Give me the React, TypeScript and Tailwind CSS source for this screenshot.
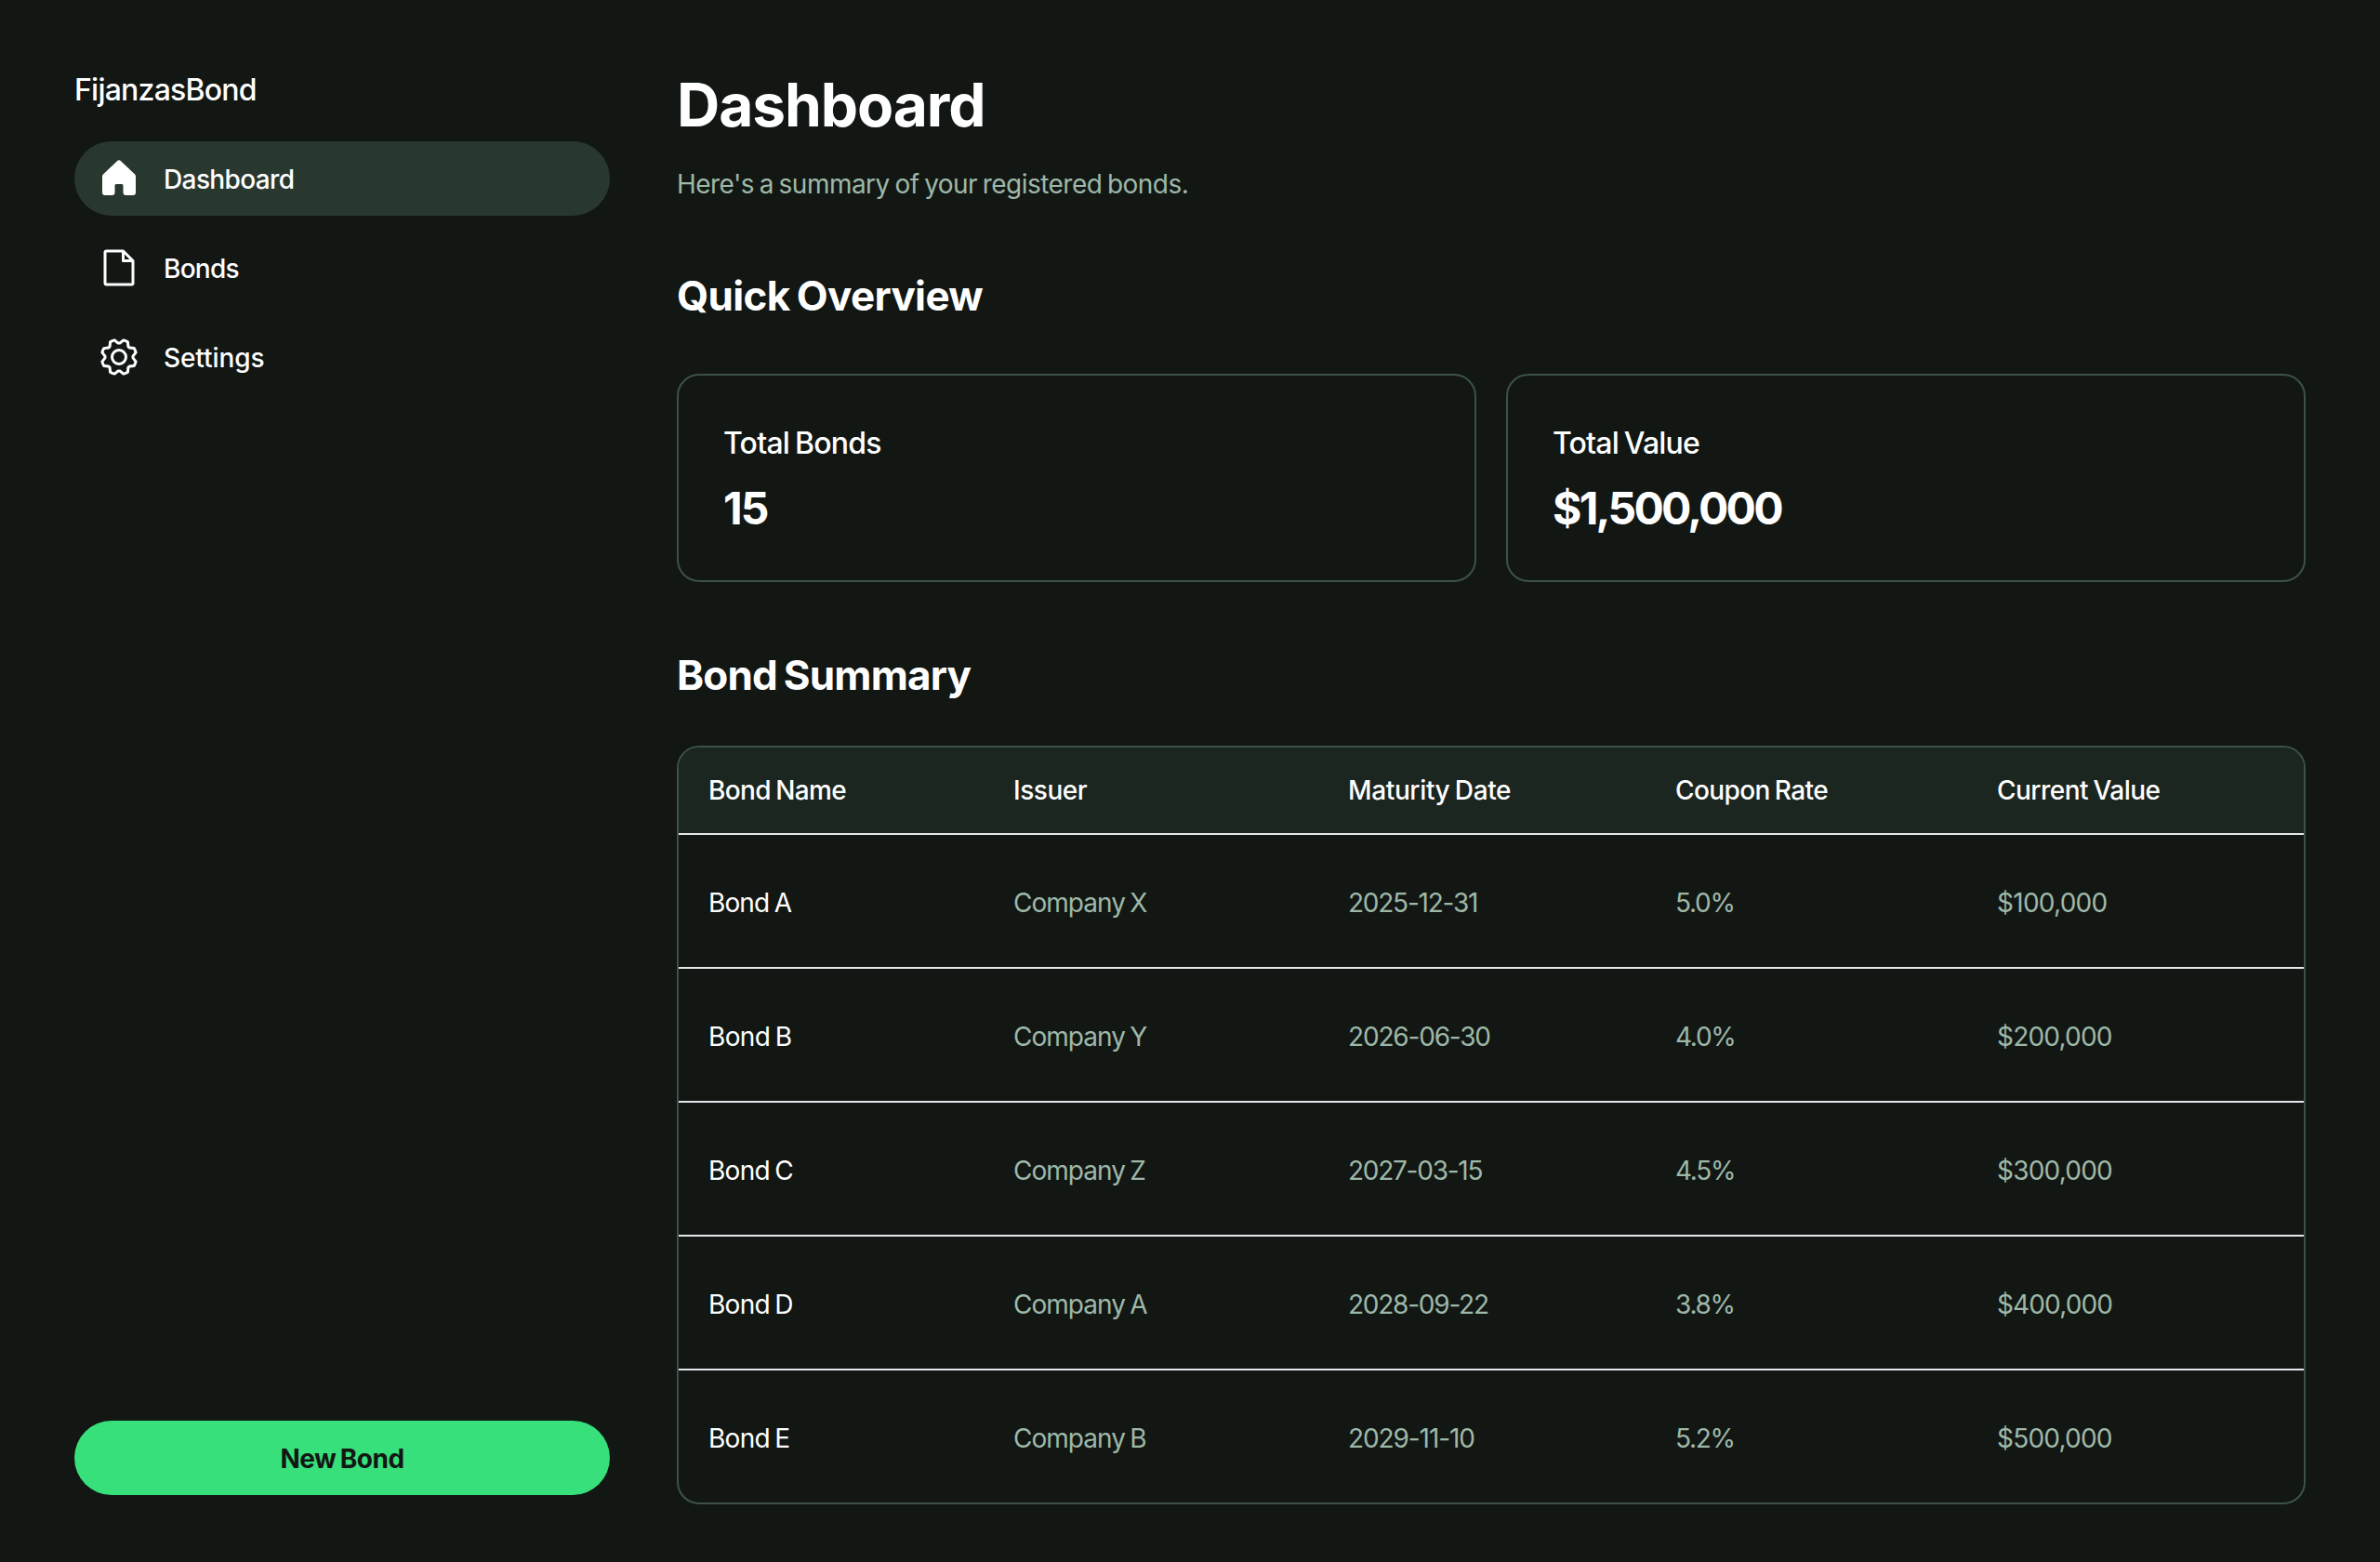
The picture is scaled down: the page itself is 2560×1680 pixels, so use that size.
import { PiGear } from 'react-icons/pi'

const bonds = [
  { name: 'Bond A', nt: 'tracking-[-0.031em]', issuer: 'Company X', date: '2025-12-31', dt: 'tracking-[-0.044em]', rate: '5.0%', value: '$100,000', vt: 'tracking-[-0.026em]' },
  { name: 'Bond B', nt: 'tracking-[-0.023em]', issuer: 'Company Y', date: '2026-06-30', dt: 'tracking-[-0.042em]', rate: '4.0%', value: '$200,000', vt: 'tracking-[-0.028em]' },
  { name: 'Bond C', nt: 'tracking-[-0.026em]', issuer: 'Company Z', date: '2027-03-15', dt: 'tracking-[-0.045em]', rate: '4.5%', value: '$300,000', vt: 'tracking-[-0.028em]' },
  { name: 'Bond D', nt: 'tracking-[-0.026em]', issuer: 'Company A', date: '2028-09-22', dt: 'tracking-[-0.044em]', rate: '3.8%', value: '$400,000', vt: 'tracking-[-0.031em]' },
  { name: 'Bond E', nt: 'tracking-[-0.026em]', issuer: 'Company B', date: '2029-11-10', dt: 'tracking-[-0.039em]', rate: '5.2%', value: '$500,000', vt: 'tracking-[-0.028em]' },
]

const headers = [
  { label: 'Bond Name', t: 'tracking-[-0.022em]' },
  { label: 'Issuer', t: 'tracking-[-0.016em]' },
  { label: 'Maturity Date', t: 'tracking-[-0.013em]' },
  { label: 'Coupon Rate', t: 'tracking-[-0.022em]' },
  { label: 'Current Value', t: 'tracking-[-0.018em]' },
]

function HouseIcon() {
  return (
    <svg className="size-12" viewBox="0 0 256 256" fill="currentColor">
      <path d="M224,115.55V208a16,16,0,0,1-16,16H168a16,16,0,0,1-16-16V168a8,8,0,0,0-8-8H112a8,8,0,0,0-8,8v40a16,16,0,0,1-16,16H48a16,16,0,0,1-16-16V115.55a16,16,0,0,1,5.17-11.78l80-75.48.11-.11a16,16,0,0,1,21.53,0,1.14,1.14,0,0,0,.11.11l80,75.48A16,16,0,0,1,224,115.55Z" />
    </svg>
  )
}

function FileIcon() {
  return (
    <svg className="size-12" viewBox="0 0 256 256" fill="currentColor">
      <path d="M213.66,82.34l-56-56A8,8,0,0,0,152,24H56A16,16,0,0,0,40,40V216a16,16,0,0,0,16,16H200a16,16,0,0,0,16-16V88A8,8,0,0,0,213.66,82.34ZM160,51.31,188.69,80H160ZM200,216H56V40h88V88a8,8,0,0,0,8,8h48V216Z" />
    </svg>
  )
}

function Stat({ label, value, labelTracking, valueTracking }: { label: string; value: string; labelTracking: string; valueTracking: string }) {
  return (
    <div className="flex flex-1 flex-col gap-4 rounded-3xl border-2 border-[#3d5245] p-12">
      <p className={`translate-y-px text-[32px] leading-[48px] font-medium ${labelTracking}`}>{label}</p>
      <p className={`translate-y-px text-5xl leading-[60px] font-bold ${valueTracking}`}>{value}</p>
    </div>
  )
}

const columns = 'grid grid-cols-[328px_360px_352px_346px_362px]'

export default function App() {
  return (
    <div className="flex h-[1680px] w-[2560px] gap-2 overflow-hidden bg-[#121714] px-12 py-10 font-[Inter,sans-serif] whitespace-nowrap text-white [&_*]:[word-spacing:-0.06em]">
      <aside className="flex w-[640px] flex-col justify-between p-8">
        <div className="flex flex-col gap-8">
          <h1 className="translate-y-px text-[32px] leading-[48px] font-medium tracking-[-0.024em]">FijanzasBond</h1>
          <nav className="flex flex-col gap-4 text-[28px] leading-[42px] font-medium">
            <a className="flex h-20 items-center gap-6 rounded-full bg-[#29382f] px-6">
              <HouseIcon />
              <span className="translate-y-px tracking-[-0.022em]">Dashboard</span>
            </a>
            <a className="flex h-20 items-center gap-6 px-6">
              <FileIcon />
              <span className="translate-y-px tracking-[-0.027em]">Bonds</span>
            </a>
            <a className="flex h-20 items-center gap-6 px-6">
              <PiGear className="size-12" />
              <span className="translate-y-px tracking-[-0.003em]">Settings</span>
            </a>
          </nav>
        </div>
        <button className="flex h-20 items-center justify-center rounded-full bg-[#38e07b] text-[28px] leading-[42px] font-bold text-[#121714]">
          <span className="translate-y-px tracking-[-0.018em]">New Bond</span>
        </button>
      </aside>

      <main className="flex flex-1 flex-col">
        <header className="flex flex-col gap-6 p-8">
          <h2 className="translate-y-px text-[64px] leading-[80px] font-bold tracking-[-0.017em]">Dashboard</h2>
          <p className="translate-y-px text-[28px] leading-[42px] tracking-[-0.019em] text-[#9eb8a8]">Here's a summary of your registered bonds.</p>
        </header>

        <h3 className="px-8 pt-10 pb-6 text-[44px] leading-[56px] font-bold tracking-[-0.015em]">Quick Overview</h3>
        <section className="flex gap-8 p-8">
          <Stat label="Total Bonds" value="15" labelTracking="tracking-[-0.024em]" valueTracking="tracking-[-0.04em]" />
          <Stat label="Total Value" value="$1,500,000" labelTracking="tracking-[-0.025em]" valueTracking="tracking-[-0.058em]" />
        </section>

        <h3 className="px-8 pt-10 pb-6 text-[44px] leading-[56px] font-bold tracking-[-0.019em]">Bond Summary</h3>
        <section className="px-8 py-6">
          <div className="overflow-hidden rounded-3xl border-2 border-[#3d5245] text-[28px] leading-[42px]">
            <div className={`${columns} h-[92px] items-center bg-[#1c2620] font-medium`}>
              {headers.map((h) => (
                <div key={h.label} className={`px-8 ${h.t}`}>{h.label}</div>
              ))}
            </div>
            {bonds.map((b) => (
              <div key={b.name} className={`${columns} h-36 items-center border-t-2 border-gray-200 pt-1 text-[#9eb8a8]`}>
                <div className={`px-8 text-white ${b.nt}`}>{b.name}</div>
                <div className="px-8 tracking-[-0.035em]">{b.issuer}</div>
                <div className={`px-8 ${b.dt}`}>{b.date}</div>
                <div className="px-8 tracking-[-0.046em]">{b.rate}</div>
                <div className={`px-8 ${b.vt}`}>{b.value}</div>
              </div>
            ))}
          </div>
        </section>
      </main>
    </div>
  )
}
